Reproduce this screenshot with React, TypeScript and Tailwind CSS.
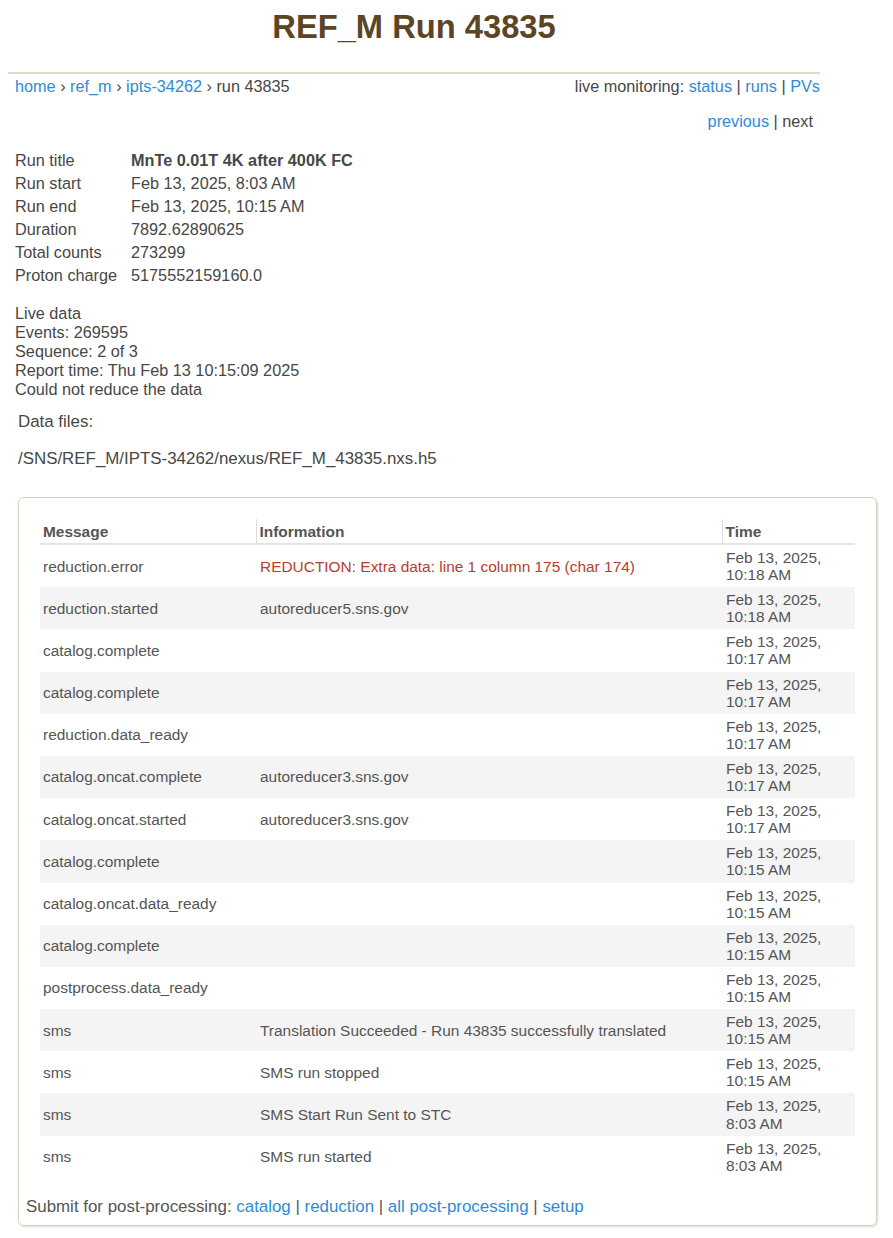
import React from "react";

const rows: [string, string, string, string, boolean?][] = [
  ["reduction.error", "REDUCTION: Extra data: line 1 column 175 (char 174)", "Feb 13, 2025,", "10:18 AM", true],
  ["reduction.started", "autoreducer5.sns.gov", "Feb 13, 2025,", "10:18 AM"],
  ["catalog.complete", "", "Feb 13, 2025,", "10:17 AM"],
  ["catalog.complete", "", "Feb 13, 2025,", "10:17 AM"],
  ["reduction.data_ready", "", "Feb 13, 2025,", "10:17 AM"],
  ["catalog.oncat.complete", "autoreducer3.sns.gov", "Feb 13, 2025,", "10:17 AM"],
  ["catalog.oncat.started", "autoreducer3.sns.gov", "Feb 13, 2025,", "10:17 AM"],
  ["catalog.complete", "", "Feb 13, 2025,", "10:15 AM"],
  ["catalog.oncat.data_ready", "", "Feb 13, 2025,", "10:15 AM"],
  ["catalog.complete", "", "Feb 13, 2025,", "10:15 AM"],
  ["postprocess.data_ready", "", "Feb 13, 2025,", "10:15 AM"],
  ["sms", "Translation Succeeded - Run 43835 successfully translated", "Feb 13, 2025,", "10:15 AM"],
  ["sms", "SMS run stopped", "Feb 13, 2025,", "10:15 AM"],
  ["sms", "SMS Start Run Sent to STC", "Feb 13, 2025,", "8:03 AM"],
  ["sms", "SMS run started", "Feb 13, 2025,", "8:03 AM"],
];

const info: [string, string, boolean?][] = [
  ["Run title", "MnTe 0.01T 4K after 400K FC", true],
  ["Run start", "Feb 13, 2025, 8:03 AM"],
  ["Run end", "Feb 13, 2025, 10:15 AM"],
  ["Duration", "7892.62890625"],
  ["Total counts", "273299"],
  ["Proton charge", "5175552159160.0"],
];

function A({ children }: { children: React.ReactNode }) {
  return <a className="text-[#2f8bd6] no-underline">{children}</a>;
}

export default function App() {
  return (
    <div className="min-h-[1238px] w-[893px] bg-white font-['Liberation_Sans',Arial,sans-serif] text-[16.25px] text-[#474747]">
      <div className="ml-[8px] w-[812px]">
        <h1 className="pt-[8px] text-center text-[32.7px] font-bold leading-[37px] text-[#5b4524]">
          REF_M Run 43835
        </h1>
        <div className="mt-[27px] h-[2px] bg-[#e0d8cc]" />
        <div className="mt-[3px] flex justify-between pl-[7px] leading-[18px]">
          <div>
            <A>home</A> › <A>ref_m</A> › <A>ipts-34262</A> › run 43835
          </div>
          <div>
            live monitoring: <A>status</A> | <A>runs</A> | <A>PVs</A>
          </div>
        </div>
        <div className="mt-[17px] flex justify-end pr-[7px] leading-[18px]">
          <div>
            <A>previous</A> | next
          </div>
        </div>
        <div className="mt-[19px] pl-[7px]">
          {info.map(([k, v, b]) => (
            <div key={k} className="flex leading-[23px]">
              <div className="w-[116px]">{k}</div>
              <div className={b ? "font-bold" : ""}>{v}</div>
            </div>
          ))}
        </div>
        <div className="mt-[17px] pl-[7px] leading-[19px]">
          <div>Live data</div>
          <div>Events: 269595</div>
          <div>Sequence: 2 of 3</div>
          <div>Report time: Thu Feb 13 10:15:09 2025</div>
          <div>Could not reduce the data</div>
        </div>
        <div className="mt-[13px] pl-[10px] text-[16.9px] leading-[19px]">Data files:</div>
        <div className="mt-[18px] pl-[10px] text-[16.9px] leading-[19px]">/SNS/REF_M/IPTS-34262/nexus/REF_M_43835.nxs.h5</div>
      </div>
      <div className="ml-[18px] mt-[29px] w-[859px] rounded-[6px] border border-[#d8cfc3] px-[7px] pb-[9px] pt-[21px] shadow-[1px_1px_2px_rgba(120,100,80,0.25)]">
        <table className="mx-[14px] w-[815px] border-collapse text-[15.45px] text-[#555]">
          <thead>
            <tr className="border-b-2 border-[#e4e4e4]">
              <th className="w-[216px] px-[3px] py-[3.5px] text-left font-bold leading-[17px]">Message</th>
              <th className="w-[466px] border-l border-[#dddddd] px-[3px] py-[3.5px] text-left font-bold leading-[17px]">Information</th>
              <th className="w-[133px] border-l border-[#dddddd] px-[3px] py-[3.5px] text-left font-bold leading-[17px]">Time</th>
            </tr>
          </thead>
          <tbody>
            {rows.map(([m, inf, t1, t2, err], i) => (
              <tr key={i} className={i % 2 === 1 ? "bg-[#f4f4f4]" : "bg-white"}>
                <td className="px-[3px] py-[4px] align-middle leading-[17.1px]">{m}</td>
                <td className={"px-[4px] py-[4px] align-middle leading-[17.1px]" + (err ? " text-[#b4402e]" : "")}>{inf}</td>
                <td className="px-[4px] py-[4px] align-middle leading-[17.1px]">
                  {t1}
                  <br />
                  {t2}
                </td>
              </tr>
            ))}
          </tbody>
        </table>
        <div className="mt-[20px] text-[16.9px] leading-[18px] text-[#555]">
          Submit for post-processing: <A>catalog</A> | <A>reduction</A> | <A>all post-processing</A> | <A>setup</A>
        </div>
      </div>
    </div>
  );
}
